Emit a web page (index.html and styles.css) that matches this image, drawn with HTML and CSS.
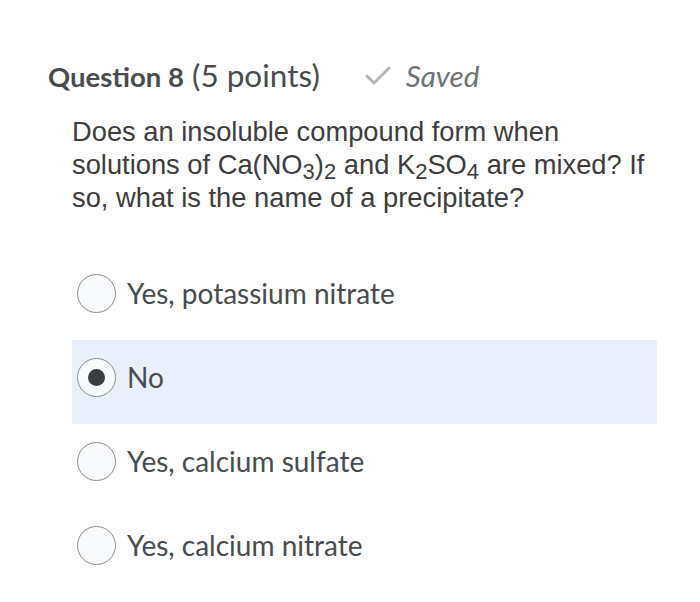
FILE: index.html
```html
<!DOCTYPE html>
<html>
<head>
<meta charset="utf-8">
<link rel="stylesheet" href="styles.css">
</head>
<body>
<div class="page">
  <div class="header">
    <span class="qnum">Question 8</span>
    <span class="points">(5 points)</span>
    <span class="saved">
      <svg class="check" width="26" height="20" viewBox="0 0 26 20"><polyline points="2,10 9,17 24,2" fill="none" stroke="#b3b6b8" stroke-width="3" stroke-linecap="round" stroke-linejoin="round"/></svg>
      <span class="saved-text">Saved</span>
    </span>
  </div>
  <div class="question">
    Does an insoluble compound form when solutions of Ca(NO<sub>3</sub>)<sub>2</sub> and K<sub>2</sub>SO<sub>4</sub> are mixed? If so, what is the name of a precipitate?
  </div>
  <div class="options">
    <div class="option"><span class="radio"></span><span class="label">Yes, potassium nitrate</span></div>
    <div class="option selected"><span class="radio checked"></span><span class="label">No</span></div>
    <div class="option"><span class="radio"></span><span class="label">Yes, calcium sulfate</span></div>
    <div class="option"><span class="radio"></span><span class="label">Yes, calcium nitrate</span></div>
  </div>
</div>
</body>
</html>
```
FILE: styles.css
```css
html, body {
  margin: 0;
  padding: 0;
  background: #ffffff;
}
.page {
  width: 700px;
  height: 602px;
  padding: 56px 0 0 48px;
  box-sizing: border-box;
}
.header {
  display: flex;
  align-items: baseline;
  font-family: Lato, "Liberation Sans", sans-serif;
  color: #494c4e;
  height: 44px;
}
.qnum {
  font-weight: 700;
  font-size: 27.5px;
}
.points {
  font-size: 31.5px;
  margin-left: 8px;
}
.saved {
  display: flex;
  align-items: baseline;
  margin-left: 45px;
}
.check {
  align-self: center;
  margin-right: 15px;
}
.saved-text {
  font-style: italic;
  font-size: 29.5px;
  color: #6e7376;
}
.question {
  margin: 15px 0 0 24px;
  width: 600px;
  font-family: "Liberation Sans", Arial, sans-serif;
  font-size: 27.3px;
  line-height: 33px;
  color: #3d3d3d;
}
.question sub {
  font-size: 22px;
  vertical-align: -5px;
  line-height: 0;
}
.options {
  margin: 42px 0 0 24px;
  width: 585px;
}
.option {
  display: flex;
  align-items: center;
  height: 84px;
  box-sizing: border-box;
  padding: 0 0 10px 5px;
  font-family: Lato, "Liberation Sans", sans-serif;
  font-size: 28px;
  color: #494c4e;
}
.option.selected {
  background: #e9f0fb;
}
.radio {
  width: 37px;
  height: 37px;
  border: 1.5px solid #8a8d90;
  border-radius: 50%;
  background: #f9fafc;
  display: flex;
  align-items: center;
  justify-content: center;
  margin-right: 11px;
  flex: none;
}
.radio.checked::after {
  content: "";
  width: 17px;
  height: 17px;
  border-radius: 50%;
  background: #3a3d42;
}
```
